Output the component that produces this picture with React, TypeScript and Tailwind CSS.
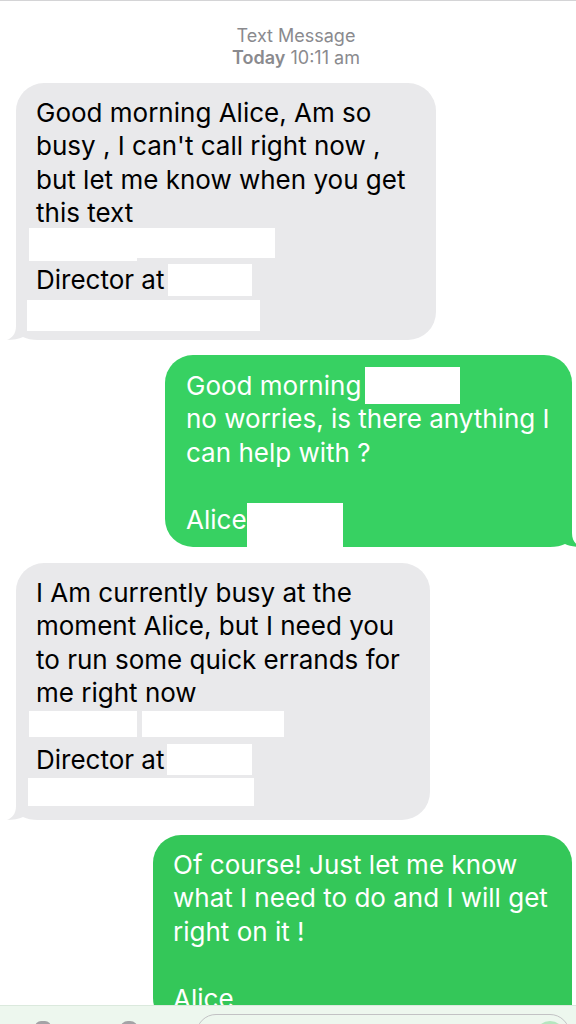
import React from 'react';

type Side = 'left' | 'right';

const Line = ({ children }: { children?: React.ReactNode }) => (
    <div className="flex h-[33.5px] items-center whitespace-nowrap">{children}</div>
);

const Blank = ({ w, h, className = '' }: { w: string; h: string; className?: string }) => (
    <span className={`inline-block shrink-0 bg-white ${w} ${h} ${className}`} />
);

function Tail({ side, color }: { side: Side; color: string }) {
    const pos = side === 'left' ? 'left-[-10px]' : 'right-[-10px] -scale-x-100';
    return (
        <svg className={`absolute bottom-0 ${pos}`} width="40" height="30" viewBox="0 0 40 30">
            <path
                d="M10 0 L10 16 C10 24 6 28 1 30 C7 30 13 29 17 27 C21 29 26 30 32 30 L40 30 L40 0 Z"
                fill={color}
            />
        </svg>
    );
}

function Bubble({ side, color, className, children }: { side: Side; color: string; className: string; children: React.ReactNode }) {
    return (
        <div className={`relative rounded-[28px] ${className}`} style={{ backgroundColor: color }}>
            {/* tail goes first so the redaction boxes sit on top of it */}
            <Tail side={side} color={color} />
            <div className="relative">{children}</div>
        </div>
    );
}

export default function App() {
    const grey = '#e9e9eb';

    return (
        <div
            className="flex h-[1024px] w-[576px] flex-col overflow-hidden border-t border-[#d4d4d6] bg-white"
            style={{ fontFamily: 'Inter, "Open Sans", sans-serif' }}
        >
            <div className="flex-1 overflow-hidden">
                {/* header */}
                <div className="pl-[16px] pt-[24px] text-center text-[18px] leading-[22px] text-[#8a8a8e]">
                    <div>Text Message</div>
                    <div>
                        <span className="font-semibold">Today</span> 10:11 am
                    </div>
                </div>

                <div className="flex flex-col text-[26px]">
                    {/* incoming 1 */}
                    <Bubble side="left" color={grey} className="ml-[16px] mt-[14px] w-[420px] pb-[10px] pl-[20px] pt-[12.5px] text-black">
                        <Line>Good morning Alice, Am so</Line>
                        <Line>busy , I can't call right now ,</Line>
                        <Line>but let me know when you get</Line>
                        <Line>this text</Line>
                        <div className="flex h-[33.5px] items-start">
                            <Blank w="w-[108px]" h="h-[33px]" className="-ml-[7px] -mt-[2px]" />
                            <Blank w="w-[138px]" h="h-[30px]" className="-mt-[2px]" />
                        </div>
                        <Line>
                            Director at
                            <Blank w="w-[84px]" h="h-[32px]" className="ml-[4px]" />
                        </Line>
                        <div className="flex h-[33.5px] items-start">
                            <Blank w="w-[233px]" h="h-[31px]" className="-ml-[9px] mt-[3px]" />
                        </div>
                    </Bubble>

                    {/* outgoing 1 */}
                    <Bubble side="right" color="#37d162" className="ml-auto mr-[4px] mt-[15px] w-[407px] pb-[11px] pl-[21px] pt-[13.5px] text-white">
                        <Line>
                            Good morning
                            <Blank w="w-[95px]" h="h-[37px]" className="ml-[4px]" />
                        </Line>
                        <Line>no worries, is there anything I</Line>
                        <Line>can help with ?</Line>
                        <Line />
                        <Line>
                            Alice
                            <Blank w="w-[96px]" h="h-[44px]" className="mt-[12px]" />
                        </Line>
                    </Bubble>

                    {/* incoming 2 */}
                    <Bubble side="left" color={grey} className="ml-[16px] mt-[16px] w-[414px] pb-[10px] pl-[20px] pt-[12.5px] text-black">
                        <Line>I Am currently busy at the</Line>
                        <Line>moment Alice, but I need you</Line>
                        <Line>to run some quick errands for</Line>
                        <Line>me right now</Line>
                        <div className="flex h-[33.5px] items-start">
                            <Blank w="w-[108px]" h="h-[26px]" className="-ml-[7px] mt-[1.5px]" />
                            <Blank w="w-[142px]" h="h-[26px]" className="ml-[5px] mt-[1.5px]" />
                        </div>
                        <Line>
                            Director at
                            <Blank w="w-[85px]" h="h-[31px]" className="ml-[3px]" />
                        </Line>
                        <div className="flex h-[33.5px] items-start">
                            <Blank w="w-[226px]" h="h-[28px]" className="-ml-[8px] mt-[1px]" />
                        </div>
                    </Bubble>

                    {/* outgoing 2 */}
                    <Bubble side="right" color="#34c759" className="ml-auto mr-[4px] mt-[15px] w-[419px] pb-[11px] pl-[20px] pt-[12.5px] text-white">
                        <Line>Of course! Just let me know</Line>
                        <Line>what I need to do and I will get</Line>
                        <Line>right on it !</Line>
                        <Line />
                        <Line>Alice</Line>
                    </Bubble>
                </div>
            </div>

            {/* input bar, mostly below the fold */}
            <div className="relative h-[19px] shrink-0 overflow-hidden border-t border-[#dbe9dd] bg-[#edf7ee]">
                <div className="flex items-start pl-[35px] pr-[6px] pt-[8px]">
                    <span className="mt-[7px] h-[24px] w-[16px] rounded-t-[6px] bg-[#a3a3a6]" />
                    <span className="ml-[69px] mt-[7px] h-[24px] w-[18px] rounded-t-[8px] bg-[#a3a3a6]" />
                    <div className="ml-[58px] flex h-[40px] flex-1 justify-end rounded-full border border-[#c2c2c4] pr-[4px] pt-[6px]">
                        <span className="h-[30px] w-[30px] rounded-full bg-[#b5e6bf]" />
                    </div>
                </div>
            </div>
        </div>
    );
}
